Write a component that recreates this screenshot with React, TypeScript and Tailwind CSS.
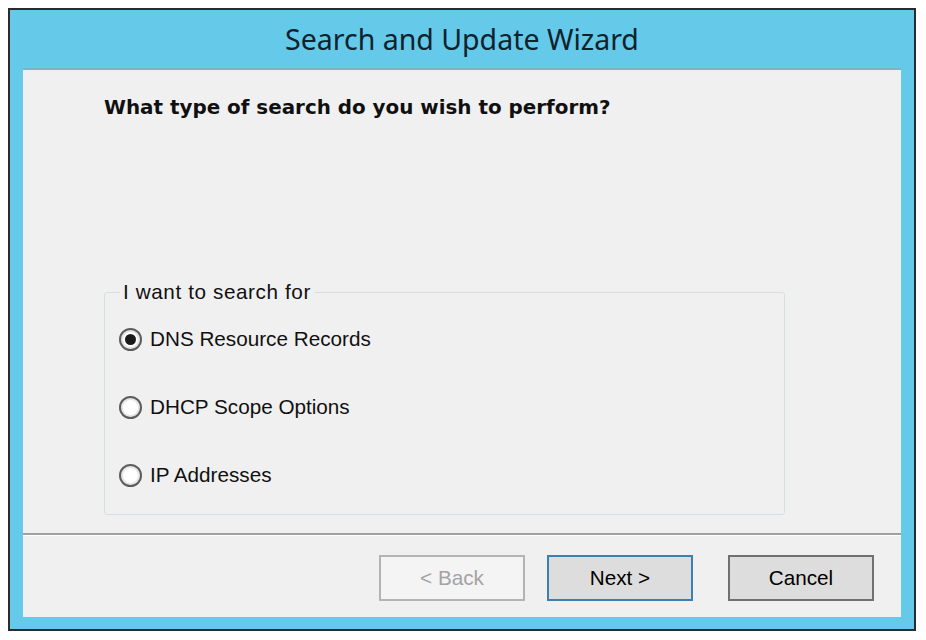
function Radio({ label, checked }: { label: string; checked?: boolean }) {
  return (
    <label className="flex items-center gap-[8px] h-[24px]">
      <span className="w-[23px] h-[23px] rounded-full border-2 border-[#5c5c5c] bg-white flex items-center justify-center shadow-[inset_0_0_0_2px_#e6e6e6]">
        {checked && <span className="w-[11px] h-[11px] rounded-full bg-[#1a1a1a]" />}
      </span>
      <span>{label}</span>
    </label>
  );
}

function Button({ label, kind }: { label: string; kind: "disabled" | "default" | "normal" }) {
  const cls =
    kind === "disabled"
      ? "border-2 border-[#b4b4b4] bg-[#f4f4f4] text-[#a3a3a3]"
      : kind === "default"
      ? "border-2 border-[#3c7fb1] bg-[#dddddd] text-black"
      : "border-2 border-[#707070] bg-[#dddddd] text-black ml-[13px]";
  return (
    <button className={`w-[146px] h-[46px] flex items-center justify-center ${cls}`}>
      {label}
    </button>
  );
}

export default function App() {
  return (
    <div
      className="w-[926px] h-[640px] bg-white p-[8px]"
      style={{ fontFamily: '"Liberation Sans", Arial, sans-serif' }}
    >
      <div className="w-[908px] h-[623px] border-2 border-[#2b2b2b] bg-[#65c9ea] flex flex-col">
        <div
          className="h-[58px] flex items-center justify-center text-[28.5px] text-[#10222c]"
          style={{ fontFamily: '"Noto Sans", sans-serif' }}
        >
          Search and Update Wizard
        </div>

        <div className="mx-[13px] h-[549px] bg-[#f0f0f0] border-t-2 border-[#7fb3c7] flex flex-col text-[20.7px] text-[#101010]">
          <div className="flex-1 pl-[81px] pt-[26px]">
            <h1
              className="font-bold text-[19.9px] leading-[24px]"
              style={{ fontFamily: '"DejaVu Sans", Verdana, sans-serif' }}
            >
              What type of search do you wish to perform?
            </h1>

            <fieldset className="mt-[160px] w-[681px] h-[235px] border border-[#d6dfe6] rounded-[3px] pl-[14px]">
              <legend className="ml-[1px] px-[3px] leading-[24px] tracking-[0.6px]">I want to search for</legend>
              <div className="flex flex-col gap-[44px] pt-[23px]">
                <Radio label="DNS Resource Records" checked />
                <Radio label="DHCP Scope Options" />
                <Radio label="IP Addresses" />
              </div>
            </fieldset>
          </div>

          <div className="border-t-2 border-[#a0a0a0]" />
          <div className="border-t border-white" />
          <div className="h-[81px] flex items-start justify-end gap-[22px] pt-[19px] pr-[27px]">
            <Button label="< Back" kind="disabled" />
            <Button label="Next >" kind="default" />
            <Button label="Cancel" kind="normal" />
          </div>
        </div>
      </div>
    </div>
  );
}
